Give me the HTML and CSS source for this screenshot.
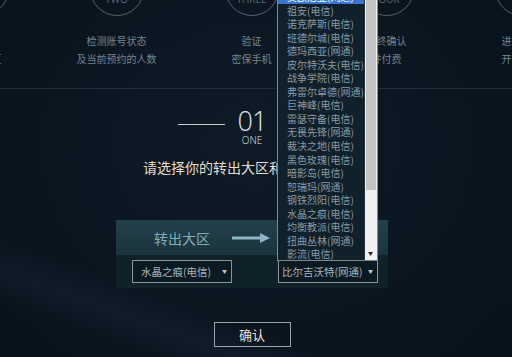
FILE: index.html
```html
<!DOCTYPE html>
<html lang="zh-CN">
<head>
<meta charset="utf-8">
<title>转区</title>
<link rel="stylesheet" href="styles.css">
</head>
<body>
<div class="steps">
  <div class="step"><div class="circle">ONE</div><p>选择<br>转出大区</p></div>
  <div class="step"><div class="circle">TWO</div><p>检测账号状态<br>及当前预约的人数</p></div>
  <div class="step"><div class="circle">THREE</div><p>验证<br>密保手机</p></div>
  <div class="step"><div class="circle">FOUR</div><p>最终确认<br>并付费</p></div>
  <div class="step"><div class="circle">FIVE</div><p>进入游戏<br>开始体验</p></div>
</div>
<div class="divider"></div>
<div class="main">
  <div class="heading">
    <span class="hline"></span>
    <div class="num"><b>01</b><small>ONE</small></div>
    <span class="hline"></span>
  </div>
  <p class="prompt">请选择你的转出大区和转入大区吧</p>
  <div class="panel">
    <div class="panel-top">
      <span class="label">转出大区</span>
      <svg class="arrow" width="40" height="10" viewBox="0 0 40 10"><rect x="0" y="3.5" width="29" height="3" fill="#8db5c6"/><polygon points="28,0 38,5 28,10" fill="#8db5c6"/></svg>
      <span class="label">转入大区</span>
    </div>
    <div class="panel-bottom">
      <div class="select">水晶之痕(电信)<i>▼</i></div>
      <div class="select open">比尔吉沃特(网通)<i>▼</i>
        <div class="list">
          <ul>
            <li class="sel">艾欧尼亚(网通)</li>
            <li>祖安(电信)</li>
            <li>诺克萨斯(电信)</li>
            <li>班德尔城(电信)</li>
            <li>德玛西亚(网通)</li>
            <li>皮尔特沃夫(电信)</li>
            <li>战争学院(电信)</li>
            <li>弗雷尔卓德(网通)</li>
            <li>巨神峰(电信)</li>
            <li>雷瑟守备(电信)</li>
            <li>无畏先锋(网通)</li>
            <li>裁决之地(电信)</li>
            <li>黑色玫瑰(电信)</li>
            <li>暗影岛(电信)</li>
            <li>恕瑞玛(网通)</li>
            <li>钢铁烈阳(电信)</li>
            <li>水晶之痕(电信)</li>
            <li>均衡教派(电信)</li>
            <li>扭曲丛林(网通)</li>
            <li>影流(电信)</li>
          </ul>
          <div class="sb"><div class="thumb"></div><span class="down">▼</span></div>
        </div>
      </div>
    </div>
  </div>
  <button class="confirm">确认</button>
</div>
</body>
</html>
```

FILE: styles.css
```css
html, body {
  margin: 0;
  padding: 0;
}
body {
  width: 512px;
  height: 357px;
  overflow: hidden;
  background:
    linear-gradient(200deg, rgba(0,0,0,0) 78%, rgba(60,90,110,0.12) 84%, rgba(0,0,0,0) 90%),
    radial-gradient(ellipse at 50% 40%, #0e1b27 0%, #0a1520 60%, #08121c 100%);
  font-family: "Noto Sans CJK SC", "Noto Sans", sans-serif;
}
.steps {
  display: flex;
  margin-left: -86px;
  width: 720px;
}
.step {
  flex: 0 0 135px;
  text-align: center;
}
.circle {
  box-sizing: border-box;
  width: 54px;
  height: 54px;
  margin: -38px auto 0;
  border: 1.5px solid #53636f;
  border-radius: 50%;
  display: flex;
  align-items: flex-end;
  justify-content: center;
  padding-bottom: 11px;
  font: 10px/10px "Open Sans", sans-serif;
  color: #5a6a74;
}
.step p {
  margin: 16px 0 0;
  font-size: 10px;
  line-height: 18px;
  color: #75858f;
  white-space: nowrap;
}
.divider {
  height: 1px;
  margin-top: 20px;
  background: #1f2e39;
}
.main {
  width: 272px;
  margin-left: 116px;
  display: flex;
  flex-direction: column;
  align-items: center;
}
.heading {
  display: flex;
  align-items: flex-start;
  gap: 13px;
  margin-top: 18px;
}
.hline {
  width: 47px;
  height: 1px;
  margin-top: 17px;
  background: #c4cbcf;
}
.num {
  display: flex;
  flex-direction: column;
  align-items: center;
  color: #dfe4e7;
  font-family: "Open Sans", sans-serif;
}
.num b {
  font-weight: 300;
  font-size: 27px;
  line-height: 27px;
  letter-spacing: -1px;
}
.num small {
  font-weight: 300;
  font-size: 10px;
  line-height: 12px;
}
.prompt {
  margin: 11px 0 0;
  padding-right: 8px;
  font-size: 14px;
  line-height: 20px;
  color: #e6ddcc;
  white-space: nowrap;
}
.panel {
  align-self: stretch;
  margin-top: 43px;
}
.panel-top {
  height: 35px;
  padding-left: 16px;
  display: grid;
  grid-template-columns: 100px 46px 100px;
  align-items: center;
  background: linear-gradient(#24404a, #1b343e);
}
.label {
  text-align: center;
  font-size: 14px;
  color: #7fafba;
}
.arrow {
  display: block;
}
.panel-bottom {
  height: 33px;
  padding-left: 16px;
  display: grid;
  grid-template-columns: 100px 100px;
  column-gap: 46px;
  align-items: center;
  background: #0f2129;
}
.select {
  position: relative;
  box-sizing: border-box;
  height: 23px;
  padding-left: 8px;
  display: flex;
  align-items: center;
  border: 1px solid #8a969d;
  background: rgba(8, 20, 27, 0.5);
  font-size: 10.5px;
  color: #a8b5bc;
  white-space: nowrap;
}
.select i {
  position: absolute;
  right: 4px;
  top: 7px;
  font-style: normal;
  font-size: 5px;
  line-height: 6px;
  color: #c2c9cd;
}
.select.open {
  padding-left: 3px;
}
.list {
  position: absolute;
  left: -2px;
  bottom: 100%;
  box-sizing: border-box;
  width: 101px;
  height: 272px;
  border: 1px solid #7c8990;
  background: #10212b;
  overflow: hidden;
}
.list ul {
  margin: 0;
  padding: 0;
  list-style: none;
}
.list li {
  height: 13.55px;
  padding-left: 9px;
  font-size: 10px;
  line-height: 13.55px;
  color: #899aa3;
}
.list li.sel {
  background: #3a76cd;
  color: #fff;
}
.sb {
  position: absolute;
  top: 0;
  right: 0;
  bottom: 0;
  width: 12px;
  border-left: 1px solid #233540;
  background: #f0f0f0;
}
.thumb {
  height: 200px;
  margin: 0 1px;
  background: #c3c3c3;
}
.down {
  position: absolute;
  bottom: 4px;
  left: 3px;
  font-size: 5px;
  line-height: 6px;
  color: #222;
}
.confirm {
  box-sizing: border-box;
  width: 77px;
  height: 25px;
  margin-top: 34px;
  padding: 0;
  border: 1px solid #98a2a8;
  background: transparent;
  font: 13px "Noto Sans CJK SC", sans-serif;
  color: #ebe3d3;
}
```
